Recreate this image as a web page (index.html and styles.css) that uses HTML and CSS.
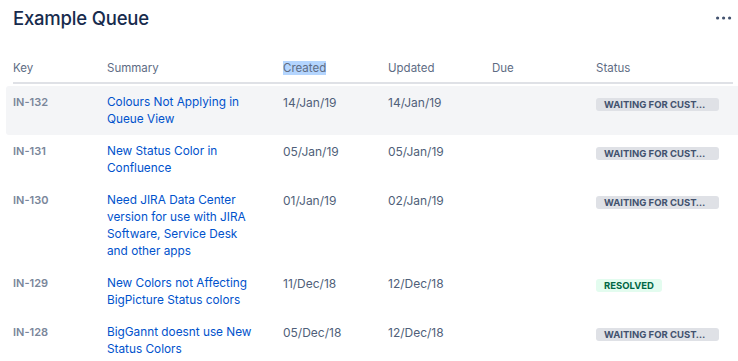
FILE: index.html
```html
<!DOCTYPE html>
<html lang="en">
<head>
    <meta charset="UTF-8">
    <meta name="viewport" content="width=device-width, initial-scale=1.0">
    <title>Example Queue</title>
    <link rel="stylesheet" href="styles.css">
</head>
<body>

    <div class="page">
        <!-- Queue title -->
        <div class="queue-header">
            <h1>Example Queue</h1>
            <button class="more-button" type="button" aria-label="More actions">
                <svg width="16" height="4" viewBox="0 0 16 4">
                    <circle cx="1.6" cy="2" r="1.6"/>
                    <circle cx="7.6" cy="2" r="1.6"/>
                    <circle cx="13.6" cy="2" r="1.6"/>
                </svg>
            </button>
        </div>

        <!-- Issue table -->
        <div class="issue-table">
            <div class="table-head">
                <div>Key</div>
                <div>Summary</div>
                <div><span class="selected">Created</span></div>
                <div>Updated</div>
                <div>Due</div>
                <div>Status</div>
            </div>

            <div class="issue-row highlighted">
                <div class="issue-key">IN-132</div>
                <div class="issue-summary"><a href="#">Colours Not Applying in Queue View</a></div>
                <div class="issue-date">14/Jan/19</div>
                <div class="issue-date">14/Jan/19</div>
                <div class="issue-date"></div>
                <div class="issue-status"><span class="lozenge waiting" title="Waiting for customer">Waiting for cust…</span></div>
            </div>

            <div class="issue-row">
                <div class="issue-key">IN-131</div>
                <div class="issue-summary"><a href="#">New Status Color in Confluence</a></div>
                <div class="issue-date">05/Jan/19</div>
                <div class="issue-date">05/Jan/19</div>
                <div class="issue-date"></div>
                <div class="issue-status"><span class="lozenge waiting" title="Waiting for customer">Waiting for cust…</span></div>
            </div>

            <div class="issue-row">
                <div class="issue-key">IN-130</div>
                <div class="issue-summary"><a href="#">Need JIRA Data Center version for use with JIRA Software, Service Desk and other apps</a></div>
                <div class="issue-date">01/Jan/19</div>
                <div class="issue-date">02/Jan/19</div>
                <div class="issue-date"></div>
                <div class="issue-status"><span class="lozenge waiting" title="Waiting for customer">Waiting for cust…</span></div>
            </div>

            <div class="issue-row">
                <div class="issue-key">IN-129</div>
                <div class="issue-summary"><a href="#">New Colors not Affecting BigPicture Status colors</a></div>
                <div class="issue-date">11/Dec/18</div>
                <div class="issue-date">12/Dec/18</div>
                <div class="issue-date"></div>
                <div class="issue-status"><span class="lozenge success">Resolved</span></div>
            </div>

            <div class="issue-row">
                <div class="issue-key">IN-128</div>
                <div class="issue-summary"><a href="#">BigGannt doesnt use New Status Colors</a></div>
                <div class="issue-date">05/Dec/18</div>
                <div class="issue-date">12/Dec/18</div>
                <div class="issue-date"></div>
                <div class="issue-status"><span class="lozenge waiting" title="Waiting for customer">Waiting for cust…</span></div>
            </div>
        </div>
    </div>

</body>
</html>
```

FILE: styles.css
```css
/* Reset & Global Styles */
* {
    margin: 0;
    padding: 0;
    box-sizing: border-box;
    font-family: 'Inter', 'Noto Sans', sans-serif;
}

body {
    background: #ffffff;
    color: #172b4d;
    overflow: hidden;
}

.page {
    padding: 0 5px 0 13px;
}

/* Title Bar */
.queue-header {
    display: flex;
    align-items: center;
    justify-content: space-between;
    height: 36px;
    margin-bottom: 19px;
}

.queue-header h1 {
    font-size: 18.5px;
    font-weight: 500;
    color: #172b4d;
    letter-spacing: -0.2px;
}

.more-button {
    background: none;
    border: none;
    width: 22px;
    height: 20px;
    display: flex;
    align-items: center;
    justify-content: center;
    margin-right: -2px;
}

.more-button svg {
    fill: #42526e;
}

/* Table */
.issue-table {
    width: 720px;
}

.table-head,
.issue-row {
    display: grid;
    grid-template-columns: 94px 176px 105px 104px 104px 1fr;
}

.table-head {
    font-size: 11.5px;
    color: #5e6c84;
    line-height: 14px;
    padding-top: 6px;
    padding-bottom: 7px;
    border-bottom: 2px solid #dfe1e6;
    margin-bottom: 2px;
}

.selected {
    background: #b4d5fe;
}

.issue-row {
    margin: 0 -7px;
    padding: 8px 7px 7px;
    border-radius: 3px;
    line-height: 17px;
}

.issue-row.highlighted {
    background: #f4f5f7;
}

.issue-key {
    font-size: 11px;
    font-weight: 600;
    color: #7a869a;
}

.issue-summary {
    padding-right: 28px;
    font-size: 11.8px;
}

.issue-summary a {
    color: #0052cc;
    text-decoration: none;
}

.issue-summary a:hover {
    text-decoration: underline;
}

.issue-date {
    font-size: 12px;
    color: #505f79;
}

.issue-status {
    padding-top: 4px;
}

/* Status Lozenges */
.lozenge {
    display: inline-block;
    height: 13px;
    line-height: 13px;
    padding: 0 8px;
    border-radius: 3px;
    background: #dfe1e6;
    color: #42526e;
    font-size: 9.5px;
    font-weight: 700;
    text-transform: uppercase;
    white-space: nowrap;
    vertical-align: top;
}

.lozenge.waiting {
    width: 123px;
}

.lozenge.success {
    background: #e3fcef;
    color: #006644;
}
```
